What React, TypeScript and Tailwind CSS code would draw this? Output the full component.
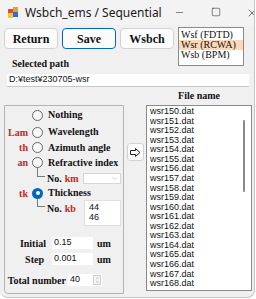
import { ChevronDown, ChevronUp, Minus, Square, X } from "lucide-react";

const serif = "font-['Liberation_Serif',serif]";
const sans = "font-['Liberation_Sans',Arial,sans-serif]";

const files = Array.from({ length: 19 }, (_, i) => `wsr${150 + i}.dat`);

function Radio({ checked }: { checked?: boolean }) {
  if (checked) {
    return (
      <span className="flex h-[11px] w-[11px] shrink-0 items-center justify-center rounded-full bg-[#0067c0]">
        <span className="block h-[4px] w-[4px] rounded-full bg-white" />
      </span>
    );
  }
  return <span className="block h-[11px] w-[11px] shrink-0 rounded-full border border-[#666] bg-[#f7f7f7]" />;
}

function OptionRow({ tag, label, checked, h }: { tag?: string; label: string; checked?: boolean; h: string }) {
  return (
    <div className={`flex items-center ${h}`}>
      <span className={`w-[23px] shrink-0 text-right text-[10px] font-bold text-[#cc1f1f] ${serif}`}>{tag}</span>
      <span className="ml-[4px] block">
        <Radio checked={checked} />
      </span>
      <span className={`ml-[5px] whitespace-nowrap text-[10px] font-bold leading-none text-[#111] ${serif}`}>{label}</span>
    </div>
  );
}

function Branch({ tag, line }: { tag: string; line: string }) {
  return (
    <div className="flex items-center">
      <span className={`ml-[32px] block w-[8px] self-start border-b border-l border-[#7a7a7a] ${line}`} />
      <span className={`ml-[2px] text-[10px] font-bold text-[#111] ${serif}`}>No.</span>
      <span className={`ml-[3px] text-[10px] font-bold text-[#cc1f1f] ${serif}`}>{tag}</span>
    </div>
  );
}

export default function App() {
  return (
    <div className="h-[299px] w-[256px] bg-white">
      <div className="flex h-[298px] w-[255px] flex-col overflow-hidden rounded-b-[8px] border-r border-b border-[#c4c4c4] bg-[#f0f0f0]">
        {/* title bar */}
        <div className="flex h-[25px] shrink-0 items-center bg-[#f3f3f3]">
          <svg className="ml-[8px] shrink-0" width="11" height="11" viewBox="0 0 11 11">
            <rect x="0" y="2" width="5" height="4" fill="#e34b2c" />
            <rect x="5" y="0" width="5" height="5" fill="#f29a2e" />
            <rect x="0" y="6" width="5" height="5" fill="#f4c82a" />
            <rect x="5" y="5" width="5" height="5" fill="#2f6fd0" />
          </svg>
          <span className="ml-[6px] whitespace-nowrap text-[12px] text-[#1a1a1a] font-['Noto_Sans',sans-serif]">Wsbch_ems / Sequential</span>
          <div className="ml-auto flex">
            <span className="flex w-[36px] justify-center">
              <Minus size={11} strokeWidth={1.2} color="#222" />
            </span>
            <span className="flex w-[36px] justify-center">
              <Square size={10} strokeWidth={1.3} color="#222" />
            </span>
            <span className="flex w-[36px] justify-center">
              <X size={12} strokeWidth={1.2} color="#222" />
            </span>
          </div>
        </div>

        {/* top buttons + mode list */}
        <div className="flex h-[49px] shrink-0 pt-[2px] pl-[4px]">
          <div className="flex flex-col">
            <div className="mt-[1px] flex gap-[4px]">
              {["Return", "Save", "Wsbch"].map((b) => (
                <button
                  key={b}
                  className={`h-[21px] w-[54px] rounded-[4px] border bg-[#fbfbfb] text-[12px] font-bold text-[#111] ${serif} ${
                    b === "Save" ? "border-[#0067c0]" : "border-[#d3d3d3]"
                  }`}
                >
                  {b}
                </button>
              ))}
            </div>
            <span className={`mt-[9px] pl-[8px] text-[10px] font-bold leading-[12px] text-[#111] ${serif}`}>Selected path</span>
          </div>
          <div className={`ml-[4px] flex h-[39px] w-[66px] flex-col border border-[#8a8a8a] bg-white pt-[2px] text-[10px] leading-[10px] text-[#111] ${serif}`}>
            <span className="pl-[2px]">Wsf (FDTD)</span>
            <span className="bg-[#fcd8b8] pl-[2px]">Wsr (RCWA)</span>
            <span className="pl-[2px]">Wsb (BPM)</span>
          </div>
        </div>

        {/* path */}
        <div className={`mx-[7px] flex h-[13px] w-[242px] shrink-0 items-center border-b border-[#c8c8c8] bg-white pl-[2px] text-[9px] text-[#111] ${sans}`}>
          D:¥test¥230705-wsr
        </div>

        {/* main */}
        <div className="flex pl-[4px]">
          <div className="mt-[18px] flex h-[189px] w-[120px] flex-col rounded-bl-[4px] border border-[#b4b4b4] pt-[1px]">
            <OptionRow label="Nothing" h="h-[16px]" />
            <OptionRow tag="Lam" label="Wavelength" h="mt-[1px] h-[16px]" />
            <OptionRow tag="th" label="Azimuth angle" h="h-[15px]" />
            <OptionRow tag="an" label="Refractive index" h="h-[15px]" />
            <div className="flex h-[16px] items-center justify-between pr-[2px]">
              <Branch tag="km" line="-mt-[4px] h-[10px]" />
              <div className="flex h-[11px] w-[38px] items-center justify-end border border-[#d6d6d6] bg-white pr-[2px]">
                <ChevronDown size={7} strokeWidth={1.5} color="#9a9a9a" />
              </div>
            </div>
            <OptionRow tag="tk" label="Thickness" checked h="h-[14px]" />
            <div className="flex items-start justify-between pr-[2px]">
              <div className="mt-[1px]">
                <Branch tag="kb" line="-mt-[2px] h-[8px]" />
              </div>
              <div className={`flex h-[26px] w-[37px] flex-col border border-[#e0e0e0] bg-white pt-[1px] pl-[4px] text-[9px] leading-[10px] text-[#111] ${sans}`}>
                <span>44</span>
                <span>46</span>
              </div>
            </div>

            <div className="mt-[11px] flex h-[12px] items-center">
              <span className={`w-[41px] text-right text-[10px] font-bold text-[#111] ${serif}`}>Initial</span>
              <span className={`ml-[6px] flex h-[12px] w-[41px] items-center bg-white pl-[2px] text-[9px] text-[#111] ${sans}`}>0.15</span>
              <span className={`ml-[4px] text-[10px] font-bold text-[#111] ${serif}`}>um</span>
            </div>
            <div className="mt-[4px] flex h-[12px] items-center">
              <span className={`w-[39px] text-right text-[10px] font-bold text-[#111] ${serif}`}>Step</span>
              <span className={`ml-[8px] flex h-[12px] w-[41px] items-center bg-white pl-[2px] text-[9px] text-[#111] ${sans}`}>0.001</span>
              <span className={`ml-[4px] text-[10px] font-bold text-[#111] ${serif}`}>um</span>
            </div>
            <div className="mt-[9px] flex h-[12px] items-center">
              <span className={`w-[61px] text-right text-[10px] font-bold text-[#111] ${serif}`}>Total number</span>
              <div className="ml-[2px] flex h-[12px] w-[34px] items-center bg-white">
                <span className={`flex-1 pl-[2px] text-[9px] text-[#111] ${sans}`}>40</span>
                <div className="mr-[1px] flex h-[10px] w-[8px] flex-col items-center justify-center border border-[#cfcfcf] bg-[#f3f3f3]">
                  <ChevronUp size={5} strokeWidth={2} color="#555" />
                  <ChevronDown size={5} strokeWidth={2} color="#555" />
                </div>
              </div>
            </div>
          </div>

          <button className="mt-[56px] ml-[3px] flex h-[18px] w-[17px] items-center justify-center rounded-[3px] border border-[#d3d3d3] bg-[#fbfbfb]">
            <svg width="11" height="9" viewBox="0 0 11 9">
              <path d="M0.5 2.5 H5.5 V0.5 L10 4.5 L5.5 8.5 V6.5 H0.5 Z" fill="none" stroke="#222" strokeWidth="1" strokeLinejoin="miter" />
            </svg>
          </button>

          <div className="ml-[2px] flex flex-col">
            <span className={`h-[18px] w-[106px] text-center text-[10px] font-bold leading-[18px] text-[#111] ${serif}`}>File name</span>
            <div className="flex h-[186px] w-[106px] border border-[#8a8a8a] bg-white">
              <div className={`flex flex-1 flex-col overflow-hidden pt-[1px] pl-[3px] text-[9px] leading-[9.56px] text-[#111] ${sans}`}>
                {files.map((f) => (
                  <span key={f}>{f}</span>
                ))}
              </div>
              <div className="mr-[6px] w-[2px]">
                <div className="mt-[14px] h-[72px] w-[2px] rounded-full bg-[#8a8a8a]" />
              </div>
            </div>
          </div>
        </div>
      </div>
    </div>
  );
}
